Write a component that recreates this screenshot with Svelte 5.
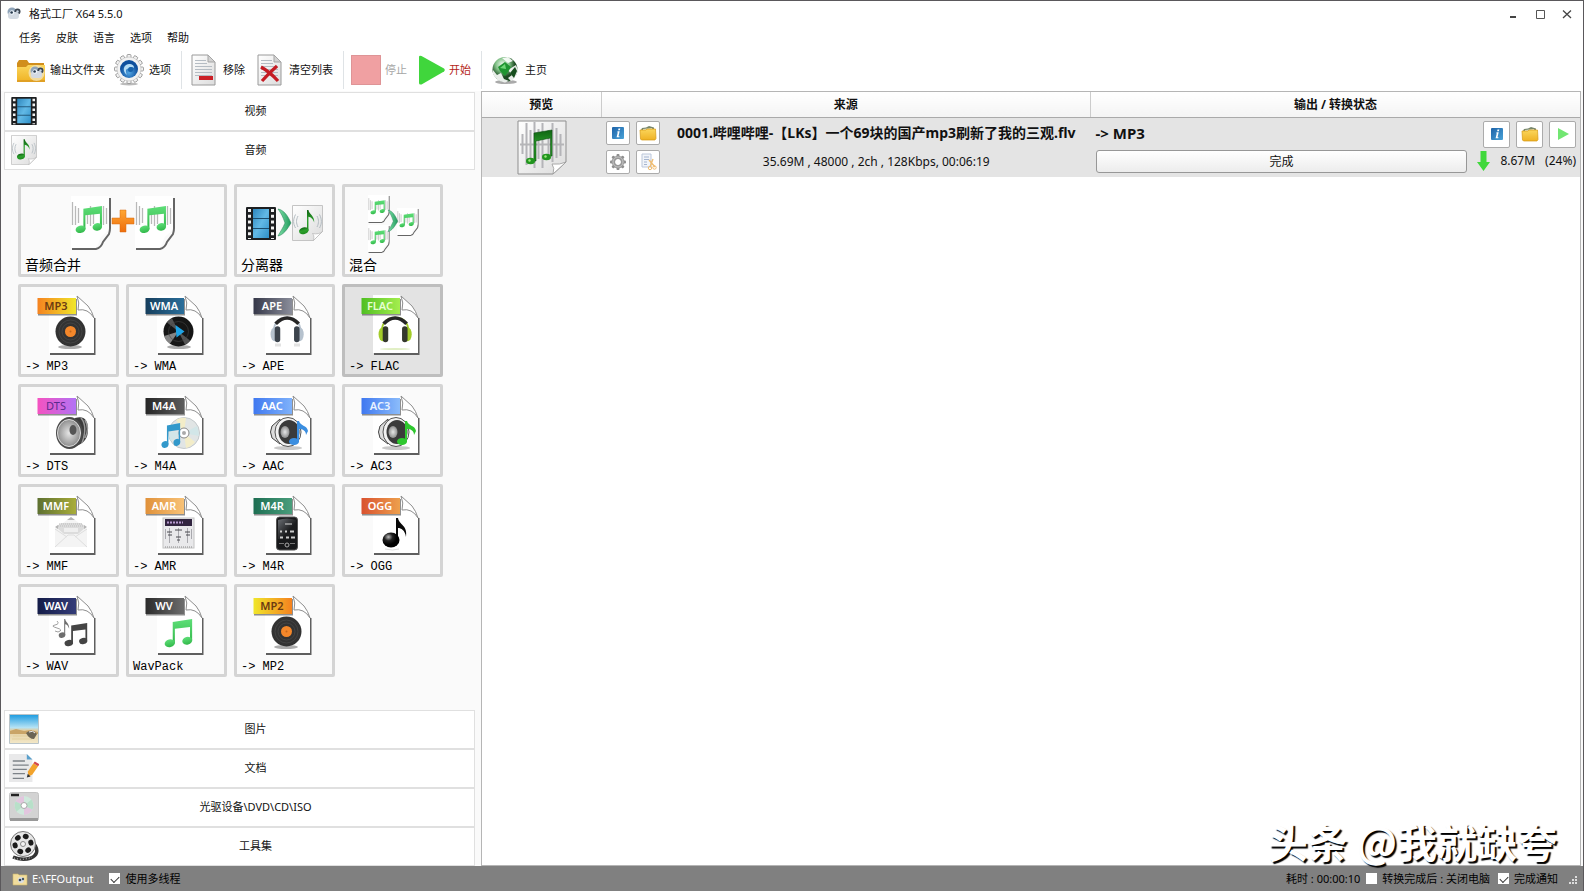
<script>
  const menus = ['任务', '皮肤', '语言', '选项', '帮助'];
  const formats = [
    { tag: 'MP3', label: '-> MP3', from: '#f58220', to: '#f0e62a', ink: '#6b3a12', art: 'vinyl' },
    { tag: 'WMA', label: '-> WMA', from: '#163e5c', to: '#2b6f9b', ink: '#fff', art: 'play' },
    { tag: 'APE', label: '-> APE', from: '#353748', to: '#8b8e9b', ink: '#fff', art: 'phones' },
    { tag: 'FLAC', label: '-> FLAC', from: '#4fbf22', to: '#a4ee4e', ink: '#e6ffd0', art: 'greenPhones', active: true },
    { tag: 'DTS', label: '-> DTS', from: '#f552c0', to: '#b273f5', ink: '#5a2a8c', art: 'speaker', thin: true },
    { tag: 'M4A', label: '-> M4A', from: '#262626', to: '#5c5c5c', ink: '#fff', art: 'cd' },
    { tag: 'AAC', label: '-> AAC', from: '#3f78f0', to: '#7fb2fb', ink: '#fff', art: 'blueSpeaker' },
    { tag: 'AC3', label: '-> AC3', from: '#3f78f0', to: '#8bbcfb', ink: '#e8f2ff', art: 'greenSpeaker' },
    { tag: 'MMF', label: '-> MMF', from: '#5d7031', to: '#a9ad3a', ink: '#fff', art: 'mail' },
    { tag: 'AMR', label: '-> AMR', from: '#e0913a', to: '#f8c277', ink: '#fff', art: 'mixer' },
    { tag: 'M4R', label: '-> M4R', from: '#1d6e52', to: '#4a9e7c', ink: '#fff', art: 'phone' },
    { tag: 'OGG', label: '-> OGG', from: '#d9512f', to: '#eda04d', ink: '#fff', art: 'note' },
    { tag: 'WAV', label: '-> WAV', from: '#141c48', to: '#343c78', ink: '#fff', art: 'notes' },
    { tag: 'WV', label: 'WavPack', from: '#2b2b2b', to: '#6d6d6d', ink: '#fff', art: 'greenBeam' },
    { tag: 'MP2', label: '-> MP2', from: '#f0e62a', to: '#f58220', ink: '#6b3a12', art: 'vinyl' }
  ];
  let threads = $state(true);
  let shutdown = $state(false);
  let notify = $state(true);
  const spokes = [0, 45, 90, 135, 180, 225, 270, 315];
  const teeth = [0, 30, 60, 90, 120, 150, 180, 210, 240, 270, 300, 330];
</script>

{#snippet beam(fill, tf)}
  <g transform={tf} {fill}>
    <path d="M9 3 29 0v22h-2.200V8.200L11.200 10v15H9z" />
    <ellipse cx="6" cy="25" rx="5.400" ry="4" transform="rotate(-14 6 25)" />
    <ellipse cx="24" cy="22.500" rx="5.200" ry="4" transform="rotate(-14 24 22.500)" />
  </g>
{/snippet}

{#snippet single(fill, tf)}
  <g transform={tf} {fill}>
    <path d="M10 0h1.600c.6 5 7 6 6.400 14-1.600-5-4-6-6.400-6.500V23H10z" />
    <ellipse cx="6.500" cy="23" rx="5.400" ry="3.800" transform="rotate(-14 6.500 23)" />
  </g>
{/snippet}

{#snippet film(tf)}
  <g transform={tf}>
    <rect width="30" height="33" rx="1" fill="#1d1f21" />
    <rect x="7" y="2" width="16" height="29" fill="url(#sky)" />
    <path d="M7 11.500h16M7 21.500h16" stroke="#1b4c6d" />
    <path d="M3.500 2v30M26.500 2v30" stroke="#f2f2f2" stroke-width="3" stroke-dasharray="3 2.800" />
  </g>
{/snippet}

{#snippet notePage(tf)}
  <g transform={tf}>
    <path d="M.5.5h30v26l-9 9H.5z" fill="url(#paper)" stroke="#c4c4c4" />
    <path d="M30.500 26.500l-9 9c1-4 0-6-1-7 4 1 8 0 10-2z" fill="#fff" stroke="#b5b5b5" stroke-width=".7" />
    <path d="M6 11c-2 4-2 7 0 11M3.500 9.500c-2.500 5-2.500 9 0 13.500M25 11c2 4 2 7 0 11M27.500 9.500c2.500 5 2.500 9 0 13.500" fill="none" stroke="#b3bcc2" />
    {@render single('url(#leaf)', 'translate(6 5) scale(.9)')}
  </g>
{/snippet}

{#snippet wavePage(tf)}
  <g transform={tf}>
    <path d="M1 53h24q5-1 7-7l6-8q1-3 1-6V2" fill="none" stroke="#4a4a4a" stroke-width="2" opacity=".85" />
    <path d="M0 0h38v31q0 4-5 7-4 3-5 7-1 7-6 7H0z" fill="#fff" />
    <path d="M1.500 6v23M4.500 10v19M7.500 12v15M16.500 13v15M19.500 10v20M22.500 12v16M32.500 10v19M35.500 12v16" stroke="#b9b9b9" stroke-width="1.300" />
    {@render beam('url(#mint)', 'translate(4 10) scale(.93)')}
  </g>
{/snippet}

{#snippet chevron(tf)}
  <path transform={tf} d="M0 0c6 1 10 7 13 14-4 7-8 12-13 13 2-4 5-8 7-13C5 8 3 4 0 0z" fill="url(#teal)" stroke="#1f7a50" stroke-width=".5" />
{/snippet}

{#snippet gear(fill)}
  <g transform="translate(15 15)">
    {#each teeth as a}
      <rect x="-2" y="-14.500" width="4" height="6" rx="1" {fill} stroke="#8b8b8b" stroke-width=".8" transform="rotate({a})" />
    {/each}
    <circle r="12" {fill} stroke="#b5b5b5" stroke-width=".5" />
  </g>
{/snippet}

{#snippet camera()}
  <circle cx="6" cy="5" r="4.500" fill="#8ea3b8" />
  <circle cx="11.500" cy="4.500" r="3" fill="#3b4550" />
  <rect x="2" y="5" width="11" height="7" rx="3" fill="#d3dae2" />
  <circle cx="6" cy="5.500" r="2.300" fill="#eef4fa" />
  <circle cx="5.600" cy="5.500" r="1.300" fill="#26394d" />
  <circle cx="11.500" cy="4.500" r="1.200" fill="#c9d6e4" />
{/snippet}

{#snippet lineSheet()}
  <path d="M1 1h16l7 7v23H1z" fill="url(#paper)" stroke="#9a9a9a" />
  <path d="M17 1v7h7z" fill="#d2d2d2" stroke="#a5a5a5" />
  <path d="M4 6.500h11M4 9.500h12M4 12.500h17M4 15.500h17M4 18.500h17M4 21.500h17" stroke="#b5bcc3" />
{/snippet}

{#snippet bluei()}
  <svg viewBox="0 0 14 14" width="14" height="14" aria-hidden="true">
    <rect x="1" y="1" width="12" height="12" rx="1" fill="url(#info)" />
    <path d="M7.500 2.500h1.800l-.4 1.700H7.100zM6.800 5.200h1.900l-1.200 5h1L8.300 11.200H5.600l1.200-5h-.9z" fill="#fff" />
  </svg>
{/snippet}

{#snippet folder()}
  <svg viewBox="0 0 18 16" width="18" height="16" aria-hidden="true">
    <path d="M2 5l1-2 4-.5L10 1l5 1.500V7H2z" fill="#77866a" />
    <path d="M4 4l9-1 1 3H4z" fill="#e6ead8" />
    <path d="M1 5h6l1-1h8.500l.5 9.500-1 1.500H2.500L1.500 14z" fill="url(#gold)" stroke="#d69a12" stroke-width=".7" />
  </svg>
{/snippet}

{#snippet speaker(note)}
  <g transform="translate(33 28)">
    <ellipse cx="18" cy="33" rx="14" ry="2" fill="#888" opacity=".45" />
    <path d="M2 11l8-7v25L2 23q-3-6 0-12z" fill="#ddd" stroke="#444" />
    <ellipse cx="18" cy="17" rx="13" ry="14.500" fill="#f2f2f2" stroke="#555" />
    <ellipse cx="19" cy="17" rx="10.500" ry="12" fill="#3a3a3a" />
    <ellipse cx="15" cy="17" rx="4.500" ry="6" fill="url(#steel)" />
    <g transform="translate(19 6)" fill={note}>
      <path d="M8 0h2c1 5 8 4 9 10l-2 4c0-5-4-6-7-6v13H8z" />
      <ellipse cx="5" cy="20.500" rx="5" ry="3.600" />
    </g>
  </g>
{/snippet}

{#snippet headset(cup, rim)}
  <g transform="translate(0 5) scale(.92 .88)">
    <path d="M40 52q-2-23 14.500-23T69 52" fill="none" stroke={rim} stroke-width="2" />
    <path d="M42 36q12.500-13 25 0" fill="none" stroke="#262626" stroke-width="4" />
    <ellipse cx="41" cy="48" rx="4.500" ry="8" fill={rim} />
    <ellipse cx="68" cy="48" rx="4.500" ry="8" fill={rim} />
    <rect x="41" y="39" width="6" height="18" rx="3" fill={cup} />
    <rect x="62" y="39" width="6" height="18" rx="3" fill={cup} />
  </g>
{/snippet}

{#snippet art(kind)}
  {#if kind === 'vinyl'}
    <ellipse cx="49" cy="60" rx="12" ry="2" fill="#777" opacity=".6" />
    <circle cx="49.500" cy="44.500" r="15" fill="#333" />
    <circle cx="49.500" cy="44.500" r="11.500" fill="none" stroke="#444" />
    <circle cx="49.500" cy="44.500" r="8.500" fill="none" stroke="#444" />
    <circle cx="49.500" cy="44.500" r="5.500" fill="#f4872a" />
    <circle cx="49.500" cy="44.500" r="1" fill="#c4661c" />
  {:else if kind === 'play'}
    <ellipse cx="50" cy="60" rx="12" ry="2" fill="#777" opacity=".6" />
    <circle cx="49.500" cy="44.500" r="15" fill="#161616" />
    <path d="M49.500 44.500L38 35.500Q40 32.500 43 31.200zM49.500 44.500L61 53.500Q59 56.500 56 57.800z" fill="#6d6d6d" opacity=".7" />
    <path d="M49.500 44.500L35.200 49q1.500 5 5.500 8z" fill="#b4b4b4" opacity=".7" />
    <circle cx="49.500" cy="44.500" r="10" fill="none" stroke="#444" stroke-width=".6" />
    <path d="M46.500 38l9 6.500-8 6z" fill="#1fa3e4" />
  {:else if kind === 'phones'}
    {@render headset('#3c444d', '#b6c2ce')}
    <path d="M38 58h6M57 58h6" stroke="#e2e2e2" stroke-width="3" />
  {:else if kind === 'greenPhones'}
    {@render headset('#34382c', '#a3cc29')}
    <ellipse cx="50" cy="62" rx="15" ry="1" fill="#e1efc4" />
  {:else if kind === 'speaker'}
    <path d="M54 31q13-4 13 12 0 12-12 16z" fill="#3b3b3b" />
    <path d="M60 31q7 8 1 25M64 33q5 8 0 18" stroke="#999" fill="none" stroke-width="1.500" />
    <ellipse cx="48.500" cy="46" rx="13.500" ry="16" fill="#4a4a4a" />
    <ellipse cx="48" cy="46" rx="11.500" ry="13.500" fill="url(#steel)" stroke="#ddd" />
    <ellipse cx="52" cy="43" rx="3.500" ry="5" fill="#555" />
  {:else if kind === 'cd'}
    <circle cx="55" cy="46" r="15.500" fill="#e1e5e5" stroke="#c5cacc" />
    <path d="M55 46L47 33q5-3 10-2zM55 46l11 9q-4 5-9 6z" fill="#f3edc9" />
    <path d="M55 46l13-7q2 5 2 10zM55 46l-13 8q-3-5-2-10z" fill="#d2e6e8" />
    <circle cx="55" cy="46" r="5" fill="#fff" stroke="#888" />
    <circle cx="55" cy="46" r="2" fill="#aaa" />
    {@render beam('#3399cb', 'translate(32 36) scale(.66 .86)')}
  {:else if kind === 'blueSpeaker'}
    {@render speaker('#3b8ee0')}
  {:else if kind === 'greenSpeaker'}
    {@render speaker('#2fc82f')}
  {:else if kind === 'mail'}
    <path d="M34 42l16-12 16 12v18H34z" fill="#f4f4f4" />
    <path d="M40 36h20l5 4-8 7H43l-8-7z" fill="#dcdcdc" />
    <path d="M38 37h24M37 39h26" stroke="#bdbdbd" stroke-dasharray="1 1" />
    <path d="M43 41h14v4H43z" fill="#efefef" />
    <path d="M34 60l13-12h6l13 12M34 42l12 8M66 42l-12 8" fill="none" stroke="#dedede" />
    <path d="M50 30l4 3h-8zM34 40l3-2v4zM66 40l-3-2v4z" fill="#b5b5b5" />
  {:else if kind === 'mixer'}
    <rect x="34" y="31" width="31" height="30" fill="#e9e9eb" stroke="#c4c4c4" />
    <rect x="36" y="32" width="27" height="7" fill="#322540" />
    <path d="M38 35.500h16" stroke="#b79ad0" stroke-width="2" stroke-dasharray="2 1" />
    <path d="M40.500 41v15M49.500 41v15M58.500 41v15M36.500 42v10M62.500 42v10" stroke="#a9a9ae" />
    <path d="M38 45h5M39 48h4M47 50h5M48 53h3M56 45h5M57 48h4M46 43h7" stroke="#4a4a50" />
    <path d="M36 60h28" stroke="#8b8b8b" stroke-dasharray="1 1" />
  {:else if kind === 'phone'}
    <rect x="39.500" y="30" width="21" height="33" rx="3" fill="#18191b" stroke="#555" />
    <path d="M41 33q9-3 18 0v19H41z" fill="url(#glass)" />
    <path d="M43 44.500h2m3 0h2m3 0h4M43 50.500h3m3 0h3m2 0h4" stroke="#ccc" stroke-width="2" />
    <path d="M48 37h7" stroke="#ddd" />
    <path d="M42 56.500h5m6 0h5" stroke="#777" />
    <circle cx="50" cy="58" r="2" fill="none" stroke="#aaa" />
  {:else if kind === 'note'}
    <path d="M51 31h2c1 7 10 7 8 19-1-7-5-9-8-9v13h-2z" fill="#080808" />
    <ellipse cx="46" cy="53" rx="8.500" ry="7.500" fill="url(#ball)" />
    <path d="M40 62q8 2 14 0" stroke="#ddd" fill="none" />
  {:else if kind === 'notes'}
    {@render beam('#454545', 'translate(43 36) scale(.8)')}
    {@render single('#6d6d6d', 'translate(37 32) scale(.62 .7)')}
    <path d="M36 34q3 3-2 4t2 3 1 4l-3-1" fill="none" stroke="#888" stroke-width=".8" />
  {:else if kind === 'greenBeam'}
    {@render beam('url(#mint)', 'translate(35 32) scale(.97)')}
  {/if}
{/snippet}

<svg class="defs" width="0" height="0" aria-hidden="true">
  <defs>
    {#each formats as f, i}
      <linearGradient id="tag{i}"><stop stop-color={f.from} /><stop offset="1" stop-color={f.to} /></linearGradient>
    {/each}
    <linearGradient id="sky" x2="1" y2="1"><stop stop-color="#2d86bd" /><stop offset=".5" stop-color="#62b9e6" /><stop offset="1" stop-color="#2f90c8" /></linearGradient>
    <linearGradient id="paper" x2="1" y2="1"><stop stop-color="#fff" /><stop offset="1" stop-color="#dcdcdc" /></linearGradient>
    <linearGradient id="leaf" x2="0" y2="1"><stop stop-color="#0f6312" /><stop offset=".5" stop-color="#2ca02c" /><stop offset="1" stop-color="#1e8c1e" /></linearGradient>
    <linearGradient id="mint" x2="0" y2="1"><stop stop-color="#5ede78" /><stop offset="1" stop-color="#32b84a" /></linearGradient>
    <linearGradient id="teal" x2="1"><stop stop-color="#7fe0a8" /><stop offset="1" stop-color="#1f9a5c" /></linearGradient>
    <linearGradient id="info" x2="1" y2="1"><stop stop-color="#1d62a8" /><stop offset="1" stop-color="#49a3d8" /></linearGradient>
    <linearGradient id="gold" x2="0" y2="1"><stop stop-color="#fbd65c" /><stop offset="1" stop-color="#efb224" /></linearGradient>
    <linearGradient id="plus" x2="0" y2="1"><stop stop-color="#ffa733" /><stop offset="1" stop-color="#ee6d0c" /></linearGradient>
    <linearGradient id="glass" x2="1" y2="1"><stop stop-color="#6d7176" /><stop offset=".6" stop-color="#1b1c1e" /></linearGradient>
    <linearGradient id="beach" x2="0" y2="1"><stop stop-color="#1b9be0" /><stop offset=".45" stop-color="#b5e2f4" /><stop offset=".55" stop-color="#e2cda0" /><stop offset="1" stop-color="#f3e8c8" /></linearGradient>
    <radialGradient id="steel"><stop stop-color="#e6e6e6" /><stop offset="1" stop-color="#8f8f8f" /></radialGradient>
    <radialGradient id="ball" cx=".35" cy=".3"><stop stop-color="#bbb" /><stop offset=".5" stop-color="#222" /><stop offset="1" stop-color="#000" /></radialGradient>
    <radialGradient id="globe" cx=".4" cy=".3"><stop stop-color="#f4fbf2" /><stop offset=".55" stop-color="#7fc085" /><stop offset="1" stop-color="#1d4a22" /></radialGradient>
    <radialGradient id="orb" cx=".5" cy=".7"><stop stop-color="#52a6e4" /><stop offset="1" stop-color="#0e4f9d" /></radialGradient>
  </defs>
</svg>

<div class="window">
  <header class="title">
    <svg viewBox="0 0 15 13" width="15" height="13" aria-hidden="true">{@render camera()}</svg>
    <h1>格式工厂 X64 5.5.0</h1>
    <div class="controls">
      <button aria-label="最小化"><svg viewBox="0 0 12 12" width="12" height="12"><path d="M3 9h6" stroke="#444" stroke-width="2" /></svg></button>
      <button aria-label="最大化"><svg viewBox="0 0 12 12" width="12" height="12"><path d="M2.500 2.500h8v8h-8z" fill="none" stroke="#555" /></svg></button>
      <button aria-label="关闭"><svg viewBox="0 0 12 12" width="12" height="12"><path d="M2 2.500l8 7.500m0-7.500L2 10" stroke="#444" stroke-width="1.300" /></svg></button>
    </div>
  </header>

  <nav class="menu">
    {#each menus as m}<button>{m}</button>{/each}
  </nav>

  <div class="toolbar" role="toolbar">
    <button>
      <svg viewBox="0 0 30 30" width="30" height="30" aria-hidden="true">
        <path d="M1 8l2-3h8l2 3h15v19H1z" fill="#d18e1c" />
        <path d="M12 10h17v17H1V12h9z" fill="url(#gold)" />
        <path d="M1 25h28v2H1z" fill="#e0a024" />
        <circle cx="20.500" cy="18" r="8" fill="#f3e4b8" opacity=".8" />
        <g transform="translate(13 11)">{@render camera()}</g>
      </svg>
      输出文件夹
    </button>
    <button class="gear">
      <svg viewBox="0 0 30 32" width="30" height="32" aria-hidden="true">
        <ellipse cx="15" cy="30" rx="9" ry="1.500" fill="#bbb" />
        {@render gear('#f2f2f2')}
        <circle cx="15" cy="15" r="9" fill="url(#orb)" />
        <path d="M13 21c-5-4-4-10 2-11 3 0 5 1 5 4-2-2-5-1-5 1-3-1-4 2-2 6z" fill="#b5dcf5" />
        <circle cx="16.500" cy="15.500" r="2.500" fill="#1762ab" />
      </svg>
      选项
    </button>
    <i class="sep"></i>
    <button class="sheet">
      <svg viewBox="0 0 25 32" width="25" height="32" aria-hidden="true">{@render lineSheet()}<path d="M8 22h14v4H8z" fill="#cb2026" /></svg>
      移除
    </button>
    <button class="sheet clear">
      <svg viewBox="0 0 25 32" width="25" height="32" aria-hidden="true">{@render lineSheet()}<path d="M4 13q9 5 17 14M20 12Q12 19 5 27" stroke="#c41c24" stroke-width="3.200" fill="none" /></svg>
      清空列表
    </button>
    <i class="sep"></i>
    <button class="stop" disabled>
      <svg viewBox="0 0 30 30" width="30" height="30" aria-hidden="true"><path d="M0 0h30v30H0z" fill="#f0a0a2" /><path d="M.5.5h29v29H.5z" fill="none" stroke="#de9496" /></svg>
      停止
    </button>
    <button class="start">
      <svg viewBox="0 0 27 30" width="27" height="30" aria-hidden="true"><path d="M1 2q0-2 2.500-1L26 13.500q1.500 1.500 0 3L3.500 29.500Q1 30 1 28z" fill="#40d63c" /></svg>
      开始
    </button>
    <i class="sep"></i>
    <button>
      <svg viewBox="0 0 30 30" width="30" height="30" aria-hidden="true">
        <ellipse cx="15" cy="27" rx="11" ry="2" fill="#aaa" />
        <circle cx="14" cy="14.500" r="12.500" fill="url(#globe)" />
        <path d="M2 15l4 5 4-2 3 6 5 2-4 1.500Q5 26 2 19zM17 15l8-5 2 5-2 7-5 4-3-3 4-3zM11 3l6-1 5 4-5 2z" fill="#fff" opacity=".9" />
        <path d="M7 12l7-5 6 5-3 5-3 4-5-5z" fill="#1f9430" />
        <path d="M9 13l5-4 1 5z" fill="#6fd676" />
        <path d="M19 18l5-6 2 4-3 7z" fill="#174e1e" />
      </svg>
      主页
    </button>
  </div>

  <main>
    <aside>
      <button class="row">
        <svg viewBox="0 0 30 33" width="26" height="28" aria-hidden="true">{@render film('')}</svg>
        <span>视频</span>
      </button>
      <button class="row">
        <svg viewBox="0 0 31 36" width="26" height="30" aria-hidden="true">{@render notePage('')}</svg>
        <span>音频</span>
      </button>

      <section class="tiles">
        <button class="tile wide">
          <svg viewBox="0 0 203 68" width="203" height="68" aria-hidden="true">
            {@render wavePage('translate(50 9)')}
            {@render wavePage('translate(114 9)')}
            <path d="M99 23h6v8h8v6h-8v8h-6v-8h-8v-6h8z" fill="url(#plus)" stroke="#d66b13" stroke-width=".5" />
          </svg>
          <span class="cjk">音频合并</span>
        </button>
        <button class="tile">
          <svg viewBox="0 0 95 68" width="95" height="68" aria-hidden="true">
            {@render film('translate(9 20)')}
            {@render chevron('translate(41 22)')}
            {@render notePage('translate(55 18)')}
          </svg>
          <span class="cjk">分离器</span>
        </button>
        <button class="tile">
          <svg viewBox="0 0 95 68" width="95" height="68" aria-hidden="true">
            {@render wavePage('translate(23 8) scale(.54 .52)')}
            {@render wavePage('translate(23 38) scale(.54 .52)')}
            {@render wavePage('translate(52 21) scale(.54 .52)')}
            {@render chevron('translate(43 23) scale(.75 .8)')}
          </svg>
          <span class="cjk">混合</span>
        </button>
        {#each formats as f, i}
          <button class="tile" class:active={f.active}>
            <svg viewBox="0 0 95 68" width="95" height="68" aria-hidden="true">
              <path d="M29 67h44.500V31" fill="none" stroke="#5f5f5f" stroke-width="2" />
              <path d="M28 8h27c2 5 3 9 2 14 6 0 14 1 16 9v35H28z" fill="#fff" />
              <path d="M56 9q3 7 1 14 10-2 16 8-2-7-6-12z" fill="#fff" stroke="#8e8e8e" />
              <path d="M17 12h39v16.500H17z" fill="#444" opacity=".6" />
              <path d="M16.500 11H55v16H16.500z" fill="url(#tag{i})" />
              <text x="35" y="23" class="tag" class:thin={f.thin} fill={f.ink}>{f.tag}</text>
              {@render art(f.art)}
            </svg>
            <span>{f.label}</span>
          </button>
        {/each}
      </section>

      <button class="row">
        <svg viewBox="0 0 30 30" width="30" height="30" aria-hidden="true">
          <path d="M.5.5h29v29H.5z" fill="url(#beach)" stroke="#b9c4c9" />
          <path d="M1 17l6-2 8 2 7-1 7 2v2H1z" fill="#c9a468" />
          <path d="M4 22h22M3 25h20" stroke="#e2cf9e" />
          <path d="M17 19q6-5 11 1l-3 5q-5 0-8-6z" fill="#6b6454" /><path d="M20 18q4-2 6 1" stroke="#eee" fill="none" />
        </svg>
        <span>图片</span>
      </button>
      <button class="row">
        <svg viewBox="0 0 32 32" width="32" height="32" aria-hidden="true">
          <path d="M0 1h19l6 6v24H0z" fill="#e9e9ea" /><path d="M19 1l6 6h-6z" fill="#5aa0cc" />
          <path d="M4 8.500h13M4 13h17M4 17.500h15M4 22h13M4 27h12" stroke="#7d8288" stroke-width="1.400" />
          <path d="M20 20l6-9 5 3-6 9-4 2z" fill="#f2a32c" /><path d="M26 11l1.500-2 5 3-1.500 2z" fill="#d3474b" /><path d="M20 22l3 3-4 1z" fill="#333" />
        </svg>
        <span>文档</span>
      </button>
      <button class="row">
        <svg viewBox="0 0 30 30" width="30" height="30" aria-hidden="true">
          <rect x=".5" y=".5" width="29" height="28" rx="2" fill="#d3d3d3" stroke="#c4c4c4" /><path d="M1 26h28v3H1z" fill="#999" />
          <circle cx="15" cy="13.500" r="9.500" fill="#cfe8dc" /><path d="M15 13.500L6.500 9.500q3-5 8.500-5.500zM15 13.500l8.500 4q-3 5-8.500 5.500z" fill="#e2c6de" />
          <path d="M15 13.500l7.500-6q3 5 1 10zM15 13.500l-7.500 6q-3-5-1-10z" fill="#b8e0c9" />
          <circle cx="15" cy="13.500" r="3" fill="#fff" stroke="#aaa" /><path d="M2 3h8" stroke="#222" stroke-width="2.500" />
        </svg>
        <span>光驱设备\DVD\CD\ISO</span>
      </button>
      <button class="row">
        <svg viewBox="0 0 30 32" width="30" height="32" aria-hidden="true">
          <path d="M26 15q5 9-4 13-9 3-18-1" fill="none" stroke="#333" stroke-width="3.500" />
          <path d="M5 28q9 3 18-1" fill="none" stroke="#ddd" stroke-dasharray="1 2" />
          <circle cx="14" cy="14" r="12.500" fill="#e6e6e6" stroke="#777" />
          <g transform="translate(14 14)">
            {#each [0, 60, 120, 180, 240, 300] as a}
              <ellipse cx="0" cy="-8" rx="3" ry="2.600" fill="#1b1b1b" transform="rotate({a + 20})" />
            {/each}
            <circle r="2.500" fill="#f5f5f5" stroke="#888" />
          </g>
        </svg>
        <span>工具集</span>
      </button>
    </aside>

    <div class="list">
      <table>
        <colgroup><col class="c1" /><col /><col /></colgroup>
        <thead><tr><th>预览</th><th>来源</th><th>输出 / 转换状态</th></tr></thead>
        <tbody>
          <tr>
            <td>
              <div class="preview">
                <svg viewBox="0 0 50 56" width="50" height="56" aria-hidden="true">
                  <path d="M1 1h48v41L36 54H1z" fill="url(#paper)" stroke="#8f8f8f" />
                  <path d="M5.500 14v20M9.500 3v42M13.500 10v28M17.500 2v46M21.500 9v30M25.500 3v45M31.500 10v29M35.500 3v39M39.500 8v30M43.500 14v22" stroke="#b4b4b8" stroke-width="2" />
                  <path d="M3 24.500h44" stroke="#b5b5b8" stroke-width="2" />
                  <path d="M49 42L36 54q2-6-1-10 8 1 14-2z" fill="#fff" stroke="#999" stroke-width=".8" />
                  <g transform="translate(9 10)">
                    <path d="M8 3l18-3v26h-1.500V8L10 11v20H8z" fill="url(#leaf)" stroke="#0c4d10" stroke-width=".6" />
                    <ellipse cx="4.500" cy="31" rx="4.500" ry="3.200" fill="#22951f" /><ellipse cx="20.500" cy="27" rx="4.500" ry="3.200" fill="#22951f" />
                    <circle cx="3.500" cy="30.500" r="1.200" fill="#9bea7c" /><circle cx="19.500" cy="26.500" r="1.200" fill="#9bea7c" />
                  </g>
                </svg>
              </div>
            </td>
            <td>
              <div class="source">
                <div class="quad">
                  <button aria-label="信息">{@render bluei()}</button>
                  <button aria-label="打开文件夹">{@render folder()}</button>
                  <button aria-label="设置">
                    <svg viewBox="0 0 18 18" width="18" height="18" aria-hidden="true">
                      <g transform="translate(9 9)">
                        {#each spokes as a}<rect x="-1.500" y="-8" width="3" height="5" rx="1" fill="#8d8d8d" transform="rotate({a})" />{/each}
                        <circle r="4.600" fill="none" stroke="#999" stroke-width="3.400" />
                        <circle r="5" fill="none" stroke="#c4c4c4" />
                      </g>
                    </svg>
                  </button>
                  <button aria-label="剪辑">
                    <svg viewBox="0 0 18 18" width="18" height="18" aria-hidden="true">
                      <path d="M3 1h9v13H3z" fill="#f1f4f9" stroke="#bcc7da" /><path d="M5 4h5M5 6.500h5M5 9h3M5 11.500h3" stroke="#a5b5d0" />
                      <path d="M10 7l6 7M14 6l-3 8" stroke="#f0bd70" stroke-width="1.400" /><circle cx="11" cy="15" r="1.700" fill="none" stroke="#f0bd70" /><circle cx="15.500" cy="14.500" r="1.700" fill="none" stroke="#f0bd70" />
                    </svg>
                  </button>
                </div>
                <div class="text">
                  <strong>0001.哔哩哔哩-【LKs】一个69块的国产mp3刷新了我的三观.flv</strong>
                  <span>35.69M , 48000 , 2ch , 128Kbps, 00:06:19</span>
                </div>
              </div>
            </td>
            <td>
              <div class="state">
                <div class="top">
                  <strong>-&gt; MP3</strong>
                  <button aria-label="输出信息">{@render bluei()}</button>
                  <button aria-label="输出文件夹">{@render folder()}</button>
                  <button aria-label="播放"><svg viewBox="0 0 14 14" width="14" height="14" aria-hidden="true"><path d="M2 1l11 6-11 6z" fill="#72e672" /></svg></button>
                </div>
                <div class="bottom">
                  <div class="progress" role="progressbar" aria-valuenow="100" aria-label="转换进度">完成</div>
                  <svg viewBox="0 0 13 20" width="13" height="20" aria-hidden="true"><path d="M3.500 0h6v11H13l-6.500 9L0 11h3.500z" fill="#40d83c" /></svg>
                  <span>8.67M</span><span>(24%)</span>
                </div>
              </div>
            </td>
          </tr>
        </tbody>
      </table>
    </div>
  </main>

  <footer>
    <svg viewBox="0 0 16 14" width="16" height="14" aria-hidden="true">
      <path d="M1 2h5l1 1h8v10H1z" fill="#f1dd9d" stroke="#cdb569" stroke-width=".6" /><circle cx="9" cy="8" r="3" fill="#d8dee6" /><circle cx="8" cy="8" r="1.300" fill="#345" /><circle cx="11" cy="7" r="1.200" fill="#456" />
    </svg>
    <a href="#output">E:\FFOutput</a>
    <label class="first"><input type="checkbox" bind:checked={threads} />使用多线程</label>
    <span class="time">耗时 : 00:00:10</span>
    <label><input type="checkbox" bind:checked={shutdown} />转换完成后 : 关闭电脑</label>
    <label class="last"><input type="checkbox" bind:checked={notify} />完成通知</label>
    <svg class="grip" viewBox="0 0 9 9" width="9" height="9" aria-hidden="true"><path d="M7 1h2M4 4h2m1 0h2M1 7h2m1 0h2m1 0h2" stroke="#ddd" stroke-width="2" /></svg>
  </footer>

  <div class="mark">头条 @我就缺夸</div>
</div>

<style>
  :global(body) { margin: 0; background: #fff; }
  * { box-sizing: border-box; }
  .defs { position: absolute; }
  .window {
    position: relative;
    display: flex;
    flex-direction: column;
    min-height: 100vh;
    border: 1px solid #5a585b;
    border-bottom: 0;
    background: #fff;
    color: #111;
    font: 11px/16px "Noto Sans", "Noto Sans CJK SC", sans-serif;
  }
  button {
    display: flex;
    align-items: center;
    justify-content: center;
    margin: 0;
    padding: 0;
    border: 0;
    background: none;
    color: inherit;
    font: inherit;
    white-space: nowrap;
  }
  svg { display: block; flex: none; }
  .title { display: flex; align-items: center; height: 26px; padding: 0 3px 0 5px; }
  .title > svg { margin-bottom: 2px; }
  h1 { flex: 1; margin: 0 0 0 8px; font: inherit; }
  .controls { display: flex; }
  .controls button { width: 27px; height: 26px; }
  .menu { display: flex; gap: 15px; height: 21px; padding-left: 18px; }
  .toolbar { display: flex; align-items: center; height: 43px; padding-left: 15px; }
  .toolbar button { gap: 4px; }
  .toolbar .gear { gap: 5px; margin-left: 9px; }
  .toolbar .sheet { gap: 7px; }
  .toolbar .clear { margin-left: 12px; }
  .sep { width: 1px; height: 38px; margin: 0 9px 0 10px; background: #dfe3e6; }
  .toolbar .stop { gap: 4px; margin: 0 11px 0 -2px; color: #a5a5a5; }
  .toolbar .start { gap: 4px; color: #b5261a; }
  main { display: flex; flex: 1; background: #fafafa; }
  aside {
    display: flex;
    flex-direction: column;
    width: 471px;
    margin: 1px 3px 0;
  }
  .row {
    height: 39px;
    border: 1px solid #e0e0e0;
    background: #fff;
    padding: 0 2px 1px 4px;
  }
  .row svg { width: 30px; }
  .row span { flex: 1; }
  .tiles {
    flex: 1;
    display: grid;
    grid-template-columns: repeat(4, 101px);
    align-content: start;
    gap: 7px;
    padding: 14px 14px 33px;
  }
  .tile {
    flex-direction: column;
    align-items: flex-start;
    justify-content: flex-start;
    height: 93px;
    border: 3px solid #d4d4d4;
    border-radius: 2px;
    font: 12px/18px "Liberation Mono", monospace;
    color: #000;
  }
  .wide { grid-column: span 2; }
  .active { background: #e3e3e3; border-color: #bebebe; }
  .tile span { padding: 3px 0 0 4px; }
  .tile .cjk { padding-top: 0; font-size: 14px; font-family: "Noto Sans CJK SC", sans-serif; }
  .tag { font: 600 11px "Noto Sans", sans-serif; text-anchor: middle; }
  .tag.thin { font-weight: 400; }
  .list {
    flex: 1;
    margin: 0 2px 0 3px;
    border: 1px solid #b5b5b5;
    background: #fff;
  }
  table { width: 100%; table-layout: fixed; border-collapse: collapse; }
  .c1 { width: 119px; }
  th {
    height: 25px;
    padding: 2px 0 0;
    border-bottom: 1px solid #aaa;
    background: linear-gradient(#fff, #f4f4f4);
    font: bold 12px/16px "Noto Sans", "Noto Sans CJK SC", sans-serif;
  }
  th + th { border-left: 1px solid #ccc; }
  td { height: 60px; padding: 0; background: #e4e4e4; vertical-align: top; }
  td button { border: 1px solid #ababab; border-radius: 2px; background: #fff; }
  strong { font-size: 14px; line-height: 24px; white-space: nowrap; }
  .preview { display: flex; justify-content: center; padding-top: 2px; }
  .source { display: flex; gap: 12px; padding: 3px 10px 0 5px; }
  .quad { display: grid; grid-template-columns: 24px 24px; gap: 5px 6px; }
  .quad button { height: 24px; }
  .text { display: flex; flex: 1; flex-direction: column; align-items: center; gap: 5px; min-width: 0; font-size: 12px; line-height: 24px; }
  .state { padding: 3px 4px 0 5px; font-size: 12px; }
  .top { display: flex; gap: 6px; }
  .top strong { flex: 1; font-size: 15px; }
  .top button { width: 27px; height: 27px; }
  .bottom { display: flex; align-items: center; gap: 10px; margin-top: 2px; }
  .progress {
    flex: 1;
    height: 23px;
    border: 1px solid #979797;
    border-radius: 3px;
    background: linear-gradient(#fff, #ececec);
    line-height: 21px;
    text-align: center;
  }
  footer { display: flex; align-items: center; height: 25px; padding: 0 6px 0 11px; background: #808080; color: #000; }
  footer a { margin-left: 4px; color: #fff; text-decoration: none; }
  label { display: flex; align-items: center; gap: 5px; margin-left: 6px; }
  .first { margin-left: 16px; }
  .last { margin-left: 8px; }
  .time { margin-left: auto; }
  input {
    display: grid;
    place-items: center;
    appearance: none;
    width: 11px;
    height: 11px;
    margin: 0;
    background: #fff;
  }
  input:checked::before {
    content: "";
    width: 7px;
    height: 4px;
    border: solid #333;
    border-width: 0 0 1px 1px;
    transform: rotate(-45deg);
  }
  .grip { align-self: flex-end; margin: 0 0 6px 10px; }
  .mark {
    position: absolute;
    right: 26px;
    bottom: 22px;
    color: #fff;
    font: 700 40px/56px "Noto Sans CJK SC", sans-serif;
    text-shadow: 2px 2px 1px #000;
    pointer-events: none;
  }
</style>
